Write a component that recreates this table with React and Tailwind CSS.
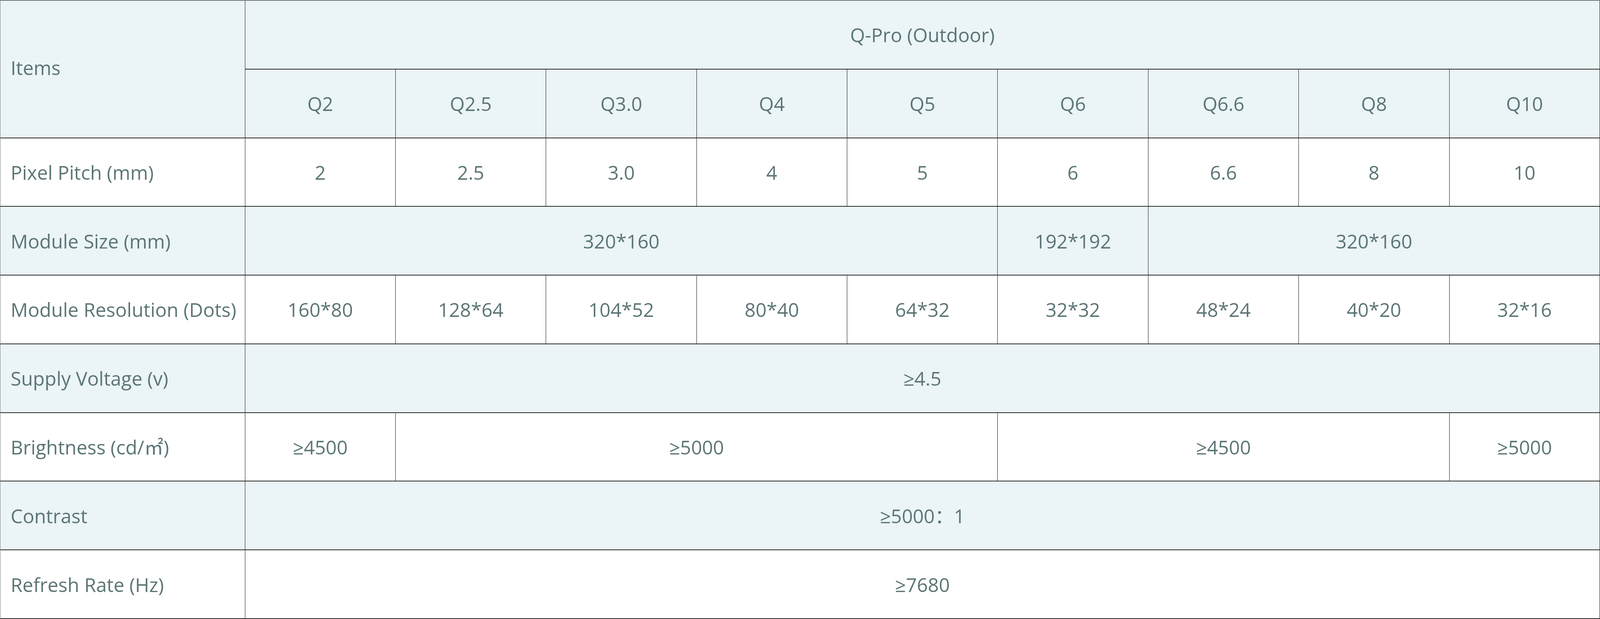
import React from "react";

const light = "bg-[#ebf4f7]";
const white = "bg-white";

function Cell({ children, span = 1, bg, label = false, rowSpan = 1 }) {
  const spanCls = {
    1: "col-span-1",
    3: "col-span-3",
    4: "col-span-4",
    5: "col-span-5",
    9: "col-span-9",
  }[span];
  const rowCls = rowSpan === 2 ? "row-span-2 pb-[0.5vh]" : "row-span-1";
  return (
    <div
      className={`${spanCls} ${rowCls} ${bg} min-w-0 flex items-center ${
        label ? "justify-start pl-[0.64vw]" : "justify-center"
      } border-r border-r-[#111111] border-b-2 border-b-[#2a2a2a] whitespace-nowrap`}
    >
      {children}
    </div>
  );
}

export default function App() {
  const models = ["Q2", "Q2.5", "Q3.0", "Q4", "Q5", "Q6", "Q6.6", "Q8", "Q10"];
  const pitch = ["2", "2.5", "3.0", "4", "5", "6", "6.6", "8", "10"];
  const res = ["160*80", "128*64", "104*52", "80*40", "64*32", "32*32", "48*24", "40*20", "32*16"];
  return (
    <div
      className="w-full h-screen grid grid-cols-[15.302%_repeat(9,minmax(0,1fr))] grid-rows-[repeat(9,minmax(0,1fr))] text-[1.2vw] leading-none text-[#5c7576] border-t-2 border-t-[#6f7a7a] border-l border-l-[#6f7a7a] bg-white overflow-hidden"
      style={{ fontFamily: '"Open Sans", "Noto Sans", "Noto Sans CJK SC", sans-serif' }}
    >
      <Cell bg={light} label rowSpan={2}>Items</Cell>
      <Cell bg={light} span={9}>Q-Pro (Outdoor)</Cell>
      {models.map((m) => (
        <Cell key={m} bg={light}>{m}</Cell>
      ))}

      <Cell bg={white} label>Pixel Pitch (mm)</Cell>
      {pitch.map((p) => (
        <Cell key={p} bg={white}>{p}</Cell>
      ))}

      <Cell bg={light} label>Module Size (mm)</Cell>
      <Cell bg={light} span={5}>320*160</Cell>
      <Cell bg={light}>192*192</Cell>
      <Cell bg={light} span={3}>320*160</Cell>

      <Cell bg={white} label>Module Resolution (Dots)</Cell>
      {res.map((r, i) => (
        <Cell key={i} bg={white}>{r}</Cell>
      ))}

      <Cell bg={light} label>Supply Voltage (v)</Cell>
      <Cell bg={light} span={9}>≥4.5</Cell>

      <Cell bg={white} label>Brightness (cd/㎡)</Cell>
      <Cell bg={white}>≥4500</Cell>
      <Cell bg={white} span={4}>≥5000</Cell>
      <Cell bg={white} span={3}>≥4500</Cell>
      <Cell bg={white}>≥5000</Cell>

      <Cell bg={light} label>Contrast</Cell>
      <Cell bg={light} span={9}>≥5000：1</Cell>

      <Cell bg={white} label>Refresh Rate (Hz)</Cell>
      <Cell bg={white} span={9}>≥7680</Cell>
    </div>
  );
}
